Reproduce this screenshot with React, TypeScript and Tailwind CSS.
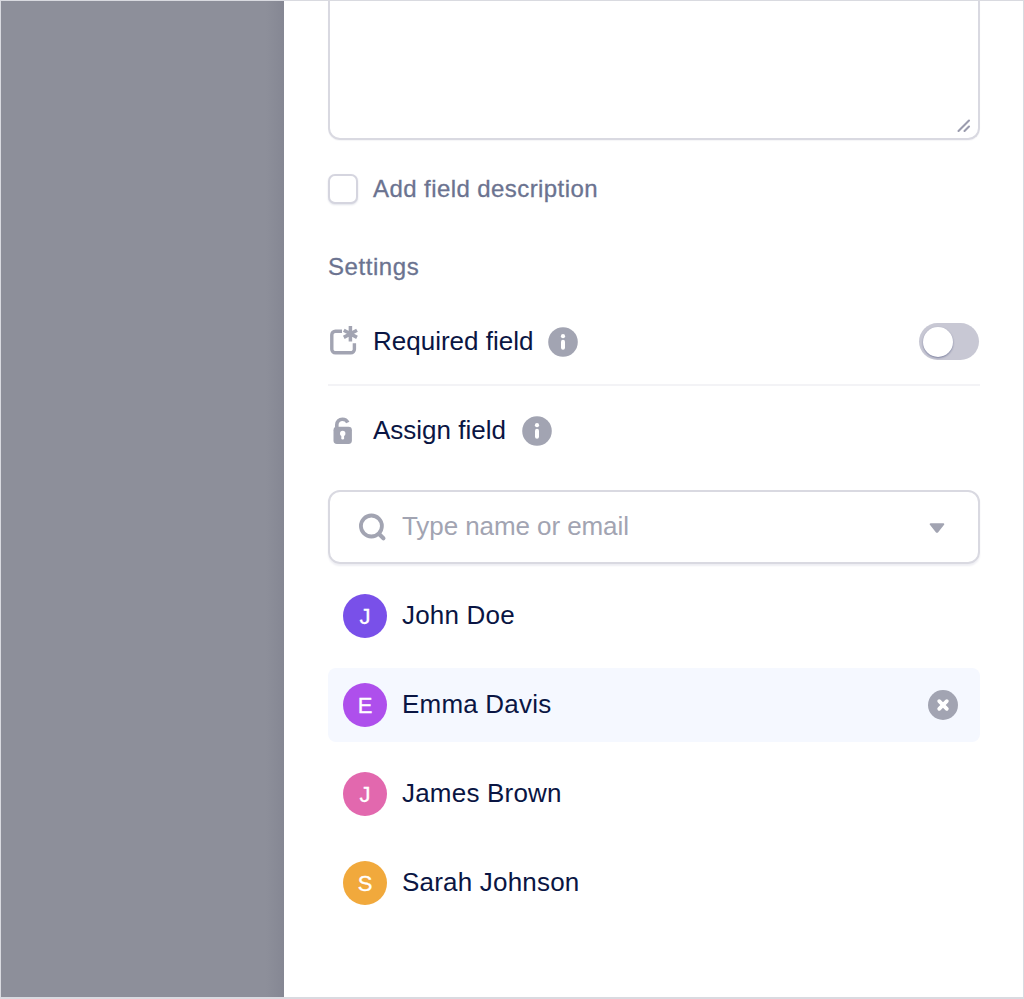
import React, { useState } from 'react';

const RequiredIcon: React.FC<{className?: string}> = ({ className }) => (
  <svg viewBox="0 0 30 30" fill="none" stroke="currentColor" overflow="visible" className={className}>
    <path d="M14 4.200H7.400A3.600 3.600 0 0 0 3.800 7.800V22.200A3.600 3.600 0 0 0 7.400 25.800H22.800A3.600 3.600 0 0 0 26.400 22.200V16.200" strokeWidth="3.400" />
    <path d="M22.400 -0.900V14.500M15.800 3.200L29 10.400M29 3.200L15.800 10.400" strokeWidth="3.500" />
  </svg>
);

const UnlockIcon: React.FC<{className?: string}> = ({ className }) => (
  <svg viewBox="0 0 30 30" fill="none" className={className}>
    <path d="M8.800 12V8.800A5.600 5.600 0 0 1 14.400 3.200Q18.200 3.200 19.800 6.600" stroke="currentColor" strokeWidth="3.600" />
    <rect x="5.500" y="10.800" width="18.400" height="17.200" rx="3.400" fill="currentColor" />
    <circle cx="14.700" cy="17.400" r="2.700" fill="#fff" />
    <path d="M14.700 18.400V22.200" stroke="#fff" strokeWidth="2.800" strokeLinecap="round" />
  </svg>
);

const InfoIcon: React.FC<{className?: string}> = ({ className }) => (
  <svg viewBox="0 0 30 30" fill="none" className={className}>
    <circle cx="15" cy="15" r="14.800" fill="currentColor" />
    <circle cx="15" cy="9.200" r="2.100" fill="#fff" />
    <path d="M15 14.700V20.700" stroke="#fff" strokeWidth="4" strokeLinecap="round" />
  </svg>
);

const SearchIcon: React.FC<{className?: string}> = ({ className }) => (
  <svg viewBox="0 0 30 30" fill="none" stroke="currentColor" strokeLinecap="round" className={className}>
    <circle cx="14.400" cy="14" r="10.500" strokeWidth="3.800" />
    <path d="M22.300 22.300L26.400 26.200" strokeWidth="4.200" />
  </svg>
);

const CaretIcon: React.FC<{className?: string}> = ({ className }) => (
  <svg viewBox="0 0 16 10" fill="currentColor" stroke="currentColor" strokeWidth="2" strokeLinejoin="round" className={className}>
    <path d="M1.700 1.200H14.300L8.600 8.500Q8 9 7.400 8.500Z" />
  </svg>
);

const RemoveIcon: React.FC<{className?: string}> = ({ className }) => (
  <svg viewBox="0 0 30 30" fill="none" className={className}>
    <circle cx="15" cy="15" r="15" fill="currentColor" />
    <path d="M11.200 11.200L18.800 18.800M18.800 11.200L11.200 18.800" stroke="#fff" strokeWidth="3.800" strokeLinecap="round" />
  </svg>
);

const ResizeIcon: React.FC<{className?: string}> = ({ className }) => (
  <svg viewBox="0 0 14 14" fill="none" stroke="currentColor" strokeWidth="2.100" strokeLinecap="round" className={className}>
    <path d="M1.500 12L12 1.500M7.500 12L12 7.500" />
  </svg>
);

interface Person {
  name: string;
  color: string;
}

const people: Person[] = [
  { name: 'John Doe', color: 'bg-[#7950e9]' },
  { name: 'Emma Davis', color: 'bg-[#ae4fec]' },
  { name: 'James Brown', color: 'bg-[#e268ae]' },
  { name: 'Sarah Johnson', color: 'bg-[#f1a93c]' },
];

export default function App() {
  const [described, setDescribed] = useState(false);
  const [required, setRequired] = useState(false);
  const [selected, setSelected] = useState<string | null>('Emma Davis');

  return (
    <div className="flex h-[999px] w-[1024px] overflow-hidden border border-b-2 border-[#d9dae0] bg-white font-['Liberation_Sans',Arial,sans-serif] text-[26px] text-[#0a1543]">
      <div className="w-[283px] shrink-0 bg-[linear-gradient(to_right,#8d8f9a_0,#8d8f9a_265px,#858793_283px)]" />

      <div className="flex flex-1 flex-col pl-[44px] pr-[43px]">
        <div className="flex h-[139px] shrink-0 items-end justify-end rounded-b-[12px] border-2 border-t-0 border-[#d9d9e1] pb-[5px] pr-[7px] shadow-[0_1px_1px_rgba(10,21,81,0.04)]">
          <ResizeIcon className="h-[14px] w-[14px] text-[#9b9cae]" />
        </div>

        <label className="mt-[34px] flex h-[30px] shrink-0 items-center text-[24px] text-[#6b7390]">
          <input
            type="checkbox"
            checked={described}
            onChange={() => setDescribed(!described)}
            className="mr-[15px] h-[30px] w-[30px] appearance-none rounded-[7px] border-2 border-[#d5d5df] bg-white shadow-[0_1px_2px_rgba(10,21,81,0.12)]"
          />
          <span className="pb-px tracking-[0.42px] [-webkit-text-stroke:0.3px]">Add field description</span>
        </label>

        <h2 className="mt-[48px] h-[30px] shrink-0 text-[24px] leading-[30px] tracking-[0.56px] text-[#6b7390] [-webkit-text-stroke:0.3px]">
          Settings
        </h2>

        <div className="flex h-[104px] shrink-0 items-center border-b-2 border-[#f3f3f6] pt-[17px]">
          <RequiredIcon className="mr-[15px] h-[30px] w-[30px] text-[#a2a4b2]" />
          <span className="pb-px">Required field</span>
          <InfoIcon className="ml-[15px] h-[30px] w-[30px] text-[#a2a4b2]" />
          <button
            onClick={() => setRequired(!required)}
            className={`ml-auto mr-px flex h-[37px] w-[60px] items-center rounded-full px-[4px] ${required ? 'justify-end bg-[#7950e9]' : 'bg-[#c8c8d4]'}`}
          >
            <span className="h-[30px] w-[30px] rounded-full bg-white shadow-[0_1px_2px_rgba(10,21,81,0.4)]" />
          </button>
        </div>

        <div className="flex h-[90px] shrink-0 items-center">
          <UnlockIcon className="mr-[15px] h-[30px] w-[30px] text-[#a2a4b2]" />
          <span className="pb-[2px]">Assign field</span>
          <InfoIcon className="ml-[16px] h-[30px] w-[30px] text-[#a2a4b2]" />
        </div>

        <div className="mt-[14px] flex h-[74px] shrink-0 items-center rounded-[12px] border-2 border-[#d9d9e1] pl-[27px] pr-[33px] shadow-[0_2px_2px_rgba(10,21,81,0.07)]">
          <SearchIcon className="mr-[15px] h-[30px] w-[30px] text-[#a2a4b2]" />
          <input
            type="text"
            placeholder="Type name or email"
            className="min-w-0 flex-1 pb-px tracking-[-0.08px] outline-none placeholder:text-[#a2a4b2]"
          />
          <CaretIcon className="mt-px h-[10px] w-[16px] text-[#a2a4b2]" />
        </div>

        <ul className="mt-[15px] flex flex-col gap-[15px]">
          {people.map(person => (
            <li
              key={person.name}
              onClick={() => setSelected(person.name)}
              className={`flex h-[74px] cursor-pointer items-center rounded-[8px] pl-[15px] pr-[22px] ${selected === person.name ? 'bg-[#f5f8ff]' : ''}`}
            >
              <span className={`mr-[15px] flex h-[44px] w-[44px] items-center justify-center rounded-full text-[22px] text-white [-webkit-text-stroke:0.3px] ${person.color}`}>
                {person.name[0]}
              </span>
              <span className="pb-[2px] tracking-[0.2px]">{person.name}</span>
              {selected === person.name && (
                <button
                  className="ml-auto"
                  onClick={e => {
                    e.stopPropagation();
                    setSelected(null);
                  }}
                >
                  <RemoveIcon className="h-[30px] w-[30px] text-[#a2a4b2]" />
                </button>
              )}
            </li>
          ))}
        </ul>
      </div>
    </div>
  );
}
